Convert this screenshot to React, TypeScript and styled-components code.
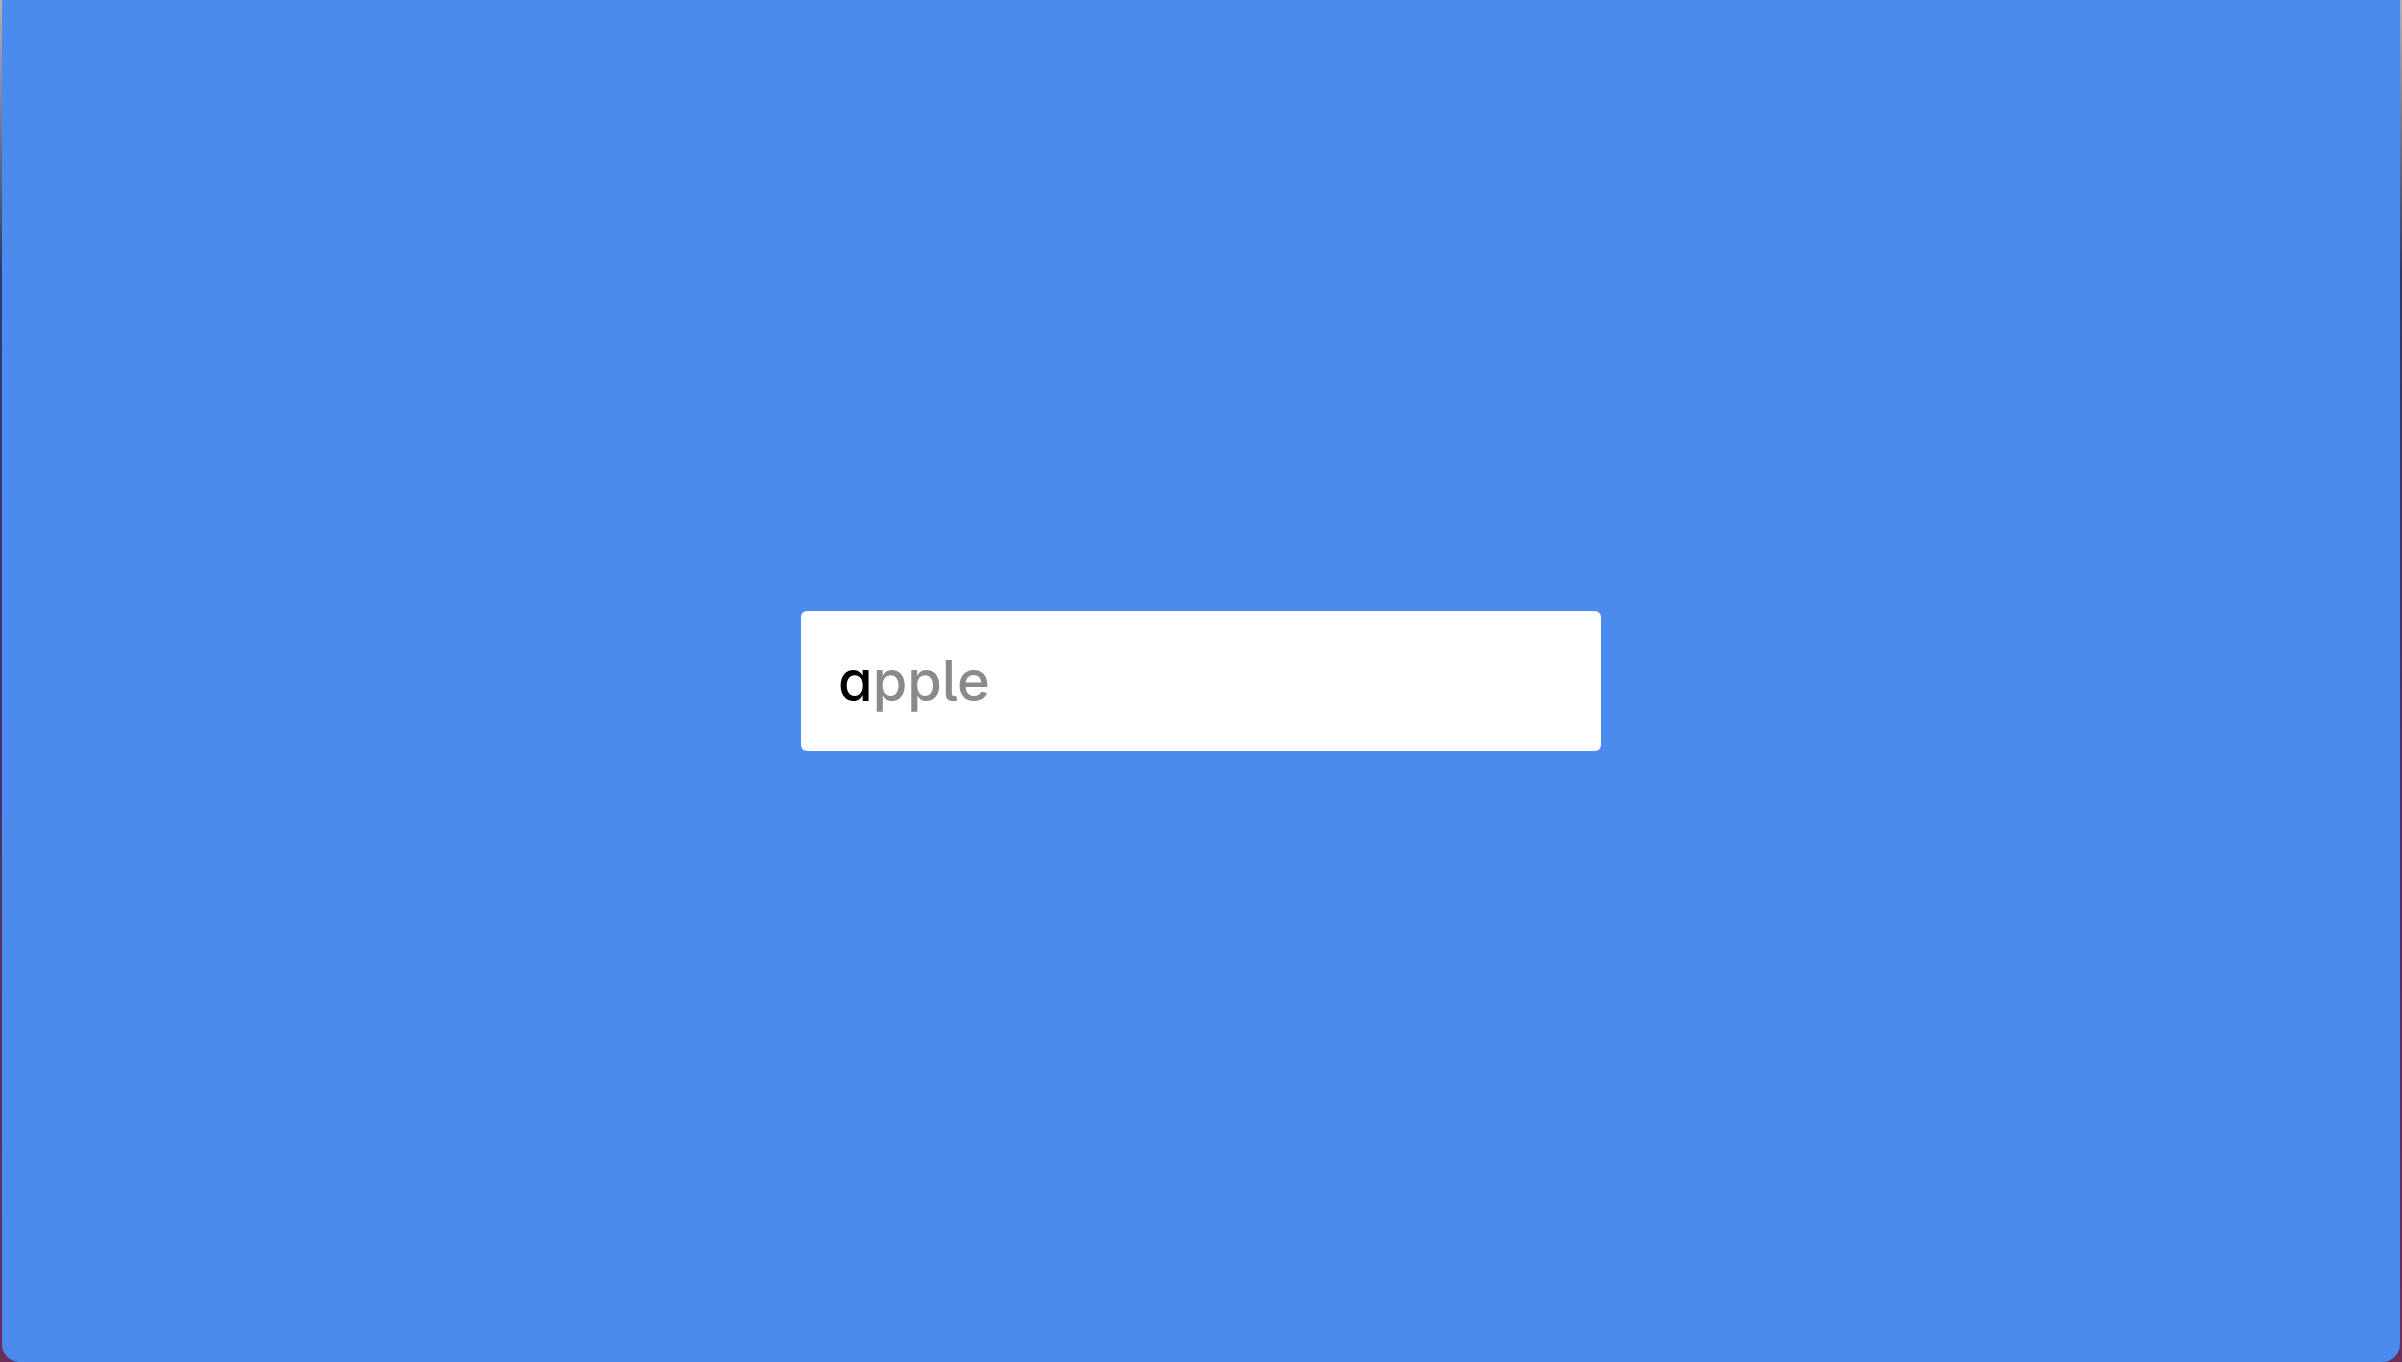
import React from "react";
import styled, { createGlobalStyle } from "styled-components";

const Global = createGlobalStyle`
  html, body { margin: 0; padding: 0; height: 100%; }
  body {
    background: linear-gradient(180deg, #b0b0b8 0%, #2c3a6a 20%, #4a2f6a 60%, #6a2f5a 100%);
    font-family: Inter, "Noto Sans", sans-serif;
    overflow: hidden;
  }
  #root { height: 100%; }
`;

const Desktop = styled.div`
  height: 1362px;
  padding: 0 2px;
  box-sizing: border-box;
  display: flex;
`;

const Window = styled.main`
  flex: 1;
  background: #4a8bed;
  border-radius: 0 0 18px 18px;
  display: flex;
  align-items: center;
  justify-content: center;
`;

const SearchBox = styled.div`
  width: 800px;
  height: 140px;
  box-sizing: border-box;
  background: #ffffff;
  border-radius: 6px;
  padding: 0 37px;
  display: flex;
  align-items: center;
  font-family: Inter, "Noto Sans", sans-serif;
  font-feature-settings: "cv11" 1, "ss02" 1;
  font-size: 56px;
  font-weight: 500;
  letter-spacing: 0;
`;

const Typed = styled.span`
  color: #000000;
`;

const Suggestion = styled.span`
  color: #8a8a8a;
`;

export default function App() {
  return (
    <>
      <Global />
      <Desktop>
        <Window>
          <SearchBox>
            <Typed>a</Typed>
            <Suggestion>pple</Suggestion>
          </SearchBox>
        </Window>
      </Desktop>
    </>
  );
}
